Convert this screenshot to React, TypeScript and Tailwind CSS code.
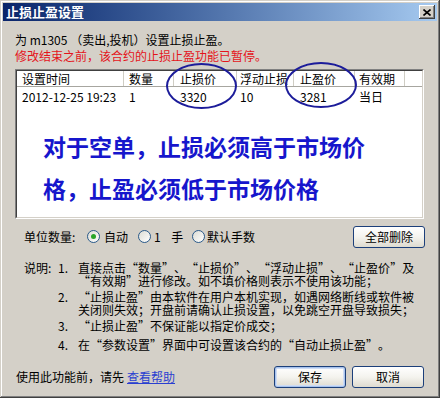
import React from "react";

// Classic Windows dialog: stop-loss / take-profit settings
const COLS = [
  { label: "设置时间", w: "w-[107px]", pl: "pl-[5px]", value: "2012-12-25 19:23" },
  { label: "数量", w: "w-[50px]", pl: "pl-[5px]", value: "1" },
  { label: "止损价", w: "w-[63px]", pl: "pl-[6px]", value: "3320" },
  { label: "浮动止损", w: "w-[57px]", pl: "pl-[3px]", value: "10" },
  { label: "止盈价", w: "w-[61px]", pl: "pl-[6px]", value: "3281" },
  { label: "有效期", w: "w-[50px]", pl: "pl-[4px]", value: "当日" },
];

const NOTES = [
  {
    n: "1.",
    lines: [
      "直接点击“数量”、“止损价”、“浮动止损”、“止盈价”及",
      "“有效期”进行修改。如不填价格则表示不使用该功能；",
    ],
    mt: "mt-0",
  },
  {
    n: "2.",
    lines: [
      "“止损止盈”由本软件在用户本机实现，如遇网络断线或软件被",
      "关闭则失效；开盘前请确认止损设置，以免跳空开盘导致损失；",
    ],
    mt: "mt-[3px]",
  },
  { n: "3.", lines: ["“止损止盈”不保证能以指定价成交；"], mt: "mt-[3px]" },
  { n: "4.", lines: ["在“参数设置”界面中可设置该合约的“自动止损止盈”。"], mt: "mt-[6px]" },
];

// full-width curly quotes, like the old bitmap font draws them
function Line({ text }: { text: string }) {
  const parts = text.split(/([“”])/);
  return (
    <div>
      {parts.map((p, i) =>
        p === "“" ? (
          <span key={i} className="inline-block w-[12px] text-right">“</span>
        ) : p === "”" ? (
          <span key={i} className="inline-block w-[12px] text-left">”</span>
        ) : (
          <React.Fragment key={i}>{p}</React.Fragment>
        )
      )}
    </div>
  );
}

function XpButton({ children, def }: { children: React.ReactNode; def?: boolean }) {
  return (
    <button
      type="button"
      className={`w-[72px] h-[22px] rounded-[3px] border border-[#1c3f7a] bg-linear-to-b from-white via-[#f4f3ee] to-[#dedbd0] text-[12px] leading-[20px] text-black ${
        def ? "shadow-[inset_0_0_0_1px_#a8c4ee,inset_0_0_0_2px_#cfdcf4]" : ""
      }`}
    >
      {children}
    </button>
  );
}

function Radio({ checked }: { checked?: boolean }) {
  return (
    <span className="w-[13px] h-[13px] shrink-0 rounded-full border border-[#2a5a8a] bg-linear-to-br from-[#dcdcd4] to-white flex items-center justify-center">
      {checked && <span className="w-[5px] h-[5px] rounded-full bg-[#2aa52a]" />}
    </span>
  );
}

export default function App() {
  return (
    <div className="relative w-[440px] h-[398px] p-[3px] bg-[#d4d0c8] text-[12px] text-black font-['Noto_Sans_CJK_SC',sans-serif] shadow-[inset_-1px_-1px_#404040,inset_1px_1px_#d4d0c8,inset_-2px_-2px_#808080,inset_2px_2px_#ffffff] overflow-hidden">
      {/* title bar */}
      <div className="h-[18px] flex items-center justify-between pl-[3px] pr-[2px] bg-linear-to-r from-[#0a246a] to-[#a6caf0]">
        <span className="text-white font-bold text-[13px] leading-[18px]">止损止盈设置</span>
        <span className="w-[16px] h-[14px] bg-[#d4d0c8] flex items-center justify-center shadow-[inset_-1px_-1px_#404040,inset_1px_1px_#ffffff,inset_-2px_-2px_#808080]">
          <svg width="8" height="7" viewBox="0 0 8 7">
            <path d="M0.5 0.5 L7.5 6.5 M7.5 0.5 L0.5 6.5" stroke="#000" strokeWidth="1.6" />
          </svg>
        </span>
      </div>

      <div className="px-[12px]">
        <div className="mt-[11px] leading-[16px] whitespace-nowrap">为 m1305 （卖出,投机）设置止损止盈。</div>
        <div className="leading-[16px] whitespace-nowrap text-[#e4141b]">修改结束之前，该合约的止损止盈功能已暂停。</div>

        {/* list */}
        <div className="mt-[5px] w-[409px] h-[150px] border border-t-[#808080] border-l-[#808080] border-r-white border-b-white">
          <div className="h-full border border-t-[#404040] border-l-[#404040] border-r-[#d4d0c8] border-b-[#d4d0c8] bg-white">
            <div className="flex h-[16px] border-b border-[#a7a6a0]">
              {COLS.map((c) => (
                <div key={c.label} className={`${c.w} ${c.pl} h-full leading-[15px] border-r border-[#cfcdc4] whitespace-nowrap`}>
                  {c.label}
                </div>
              ))}
            </div>
            <div className="flex h-[20px]">
              {COLS.map((c) => (
                <div key={c.label} className={`${c.w} ${c.pl} leading-[20px] whitespace-nowrap`}>
                  {c.value}
                </div>
              ))}
            </div>
            <div className="mt-[18px] pl-[26px] text-[23px] leading-[42px] font-bold text-[#1616cc] whitespace-nowrap">
              <div>对于空单，止损必须高于市场价</div>
              <div>格，止盈必须低于市场价格</div>
            </div>
          </div>
        </div>

        {/* unit row */}
        <div className="mt-[7px] h-[21px] flex items-center">
          <span className="ml-[9px] w-[63px]">单位数量:</span>
          <Radio checked />
          <span className="ml-[4px] w-[34px]">自动</span>
          <Radio />
          <span className="ml-[3px] w-[38px] [word-spacing:8px]">1 手</span>
          <Radio />
          <span className="ml-[2px]">默认手数</span>
          <span className="ml-auto">
            <XpButton>全部删除</XpButton>
          </span>
        </div>

        {/* notes */}
        <div className="mt-[14px] flex leading-[13px]">
          <span className="ml-[9px] w-[34px] shrink-0">说明:</span>
          <div className="flex flex-col">
            {NOTES.map((p) => (
              <div key={p.n} className={`flex ${p.mt}`}>
                <span className="w-[20px] shrink-0">{p.n}</span>
                <div className="whitespace-nowrap">
                  {p.lines.map((l) => (
                    <Line key={l} text={l} />
                  ))}
                </div>
              </div>
            ))}
          </div>
        </div>

        {/* bottom */}
        <div className="mt-[15px] h-[22px] flex items-center">
          <span className="ml-[1px]">使用此功能前，请先</span>
          <span className="ml-[3px] text-[#2a3fd0] underline">查看帮助</span>
          <span className="ml-auto mr-[1px] flex gap-[6px]">
            <XpButton def>保存</XpButton>
            <XpButton>取消</XpButton>
          </span>
        </div>
      </div>

      {/* hand-drawn highlight ellipses */}
      <div className="absolute left-[166px] top-[63px] w-[71px] h-[46px] rounded-[50%] border-2 border-[#1c1c9a]" />
      <div className="absolute left-[285px] top-[62px] w-[72px] h-[46px] rounded-[50%] border-2 border-[#1c1c9a]" />
    </div>
  );
}
